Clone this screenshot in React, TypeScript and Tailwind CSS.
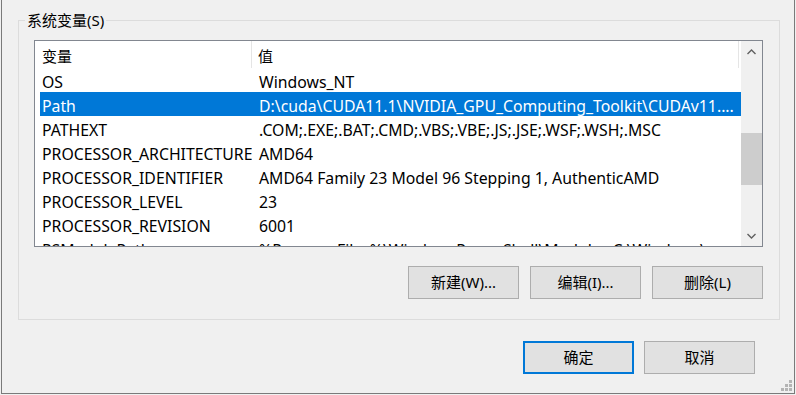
import React from "react";

const rows = [
  { name: "OS", value: "Windows_NT" },
  {
    name: "Path",
    value: "D:\\cuda\\CUDA11.1\\NVIDIA_GPU_Computing_Toolkit\\CUDAv11....",
    selected: true,
  },
  { name: "PATHEXT", value: ".COM;.EXE;.BAT;.CMD;.VBS;.VBE;.JS;.JSE;.WSF;.WSH;.MSC" },
  { name: "PROCESSOR_ARCHITECTURE", value: "AMD64" },
  { name: "PROCESSOR_IDENTIFIER", value: "AMD64 Family 23 Model 96 Stepping 1, AuthenticAMD" },
  { name: "PROCESSOR_LEVEL", value: "23" },
  { name: "PROCESSOR_REVISION", value: "6001" },
  { name: "PSModulePath", value: "%ProgramFiles%\\WindowsPowerShell\\Modules;C:\\Windows\\..." },
];

function Chevron({ up }: { up?: boolean }) {
  return (
    <svg width="9" height="6" viewBox="0 0 9 6">
      <path
        d={up ? "M0.5 5 L4.5 1 L8.5 5" : "M0.5 1 L4.5 5 L8.5 1"}
        fill="none"
        stroke="#606060"
        strokeWidth="1.4"
      />
    </svg>
  );
}

function Btn({ label, primary }: { label: string; primary?: boolean }) {
  return (
    <div
      className={
        "w-[111px] h-[33px] flex items-center justify-center bg-[#e1e1e1] text-black " +
        (primary ? "border-2 border-[#0078d7]" : "border border-[#adadad]")
      }
    >
      {label}
    </div>
  );
}

export default function App() {
  return (
    <div
      className="w-[796px] h-[395px] overflow-hidden bg-[#f0f0f0] text-[15px] text-black"
      style={{ fontFamily: '"Noto Sans", "Noto Sans CJK SC", sans-serif' }}
    >
      <div className="relative ml-[1px] w-[794px] h-[394px] border-x border-b border-[#7a7a7a] flex flex-col">
        {/* group box */}
        <div className="relative mt-[20px] ml-[16px] w-[762px] h-[300px] border border-[#dcdcdc] pl-[15px] pt-[19px]">
          <span className="absolute -top-[11px] left-[6px] px-[2px] bg-[#f0f0f0] leading-[20px]">
            系统变量(S)
          </span>

          {/* list view */}
          <div className="w-[729px] h-[207px] border border-[#828790] bg-white flex">
            <div className="flex-1 overflow-hidden pl-[5px]">
              <div className="h-[27px] grid grid-cols-[212px_487px] items-center">
                <div className="pl-[2px] pt-[3px] h-full flex items-center border-r border-[#e5e5e5]">变量</div>
                <div className="pl-[6px] pt-[3px] h-full flex items-center border-r border-[#e5e5e5]">值</div>
              </div>
              {rows.map((r) => (
                <div
                  key={r.name}
                  className={
                    "h-[24px] pt-[4px] grid grid-cols-[212px_488px] items-center whitespace-nowrap text-[15.8px] " +
                    (r.selected ? "bg-[#0078d7] text-white" : "")
                  }
                >
                  <div className="pl-[2px] overflow-hidden leading-[20px]">{r.name}</div>
                  <div className="pl-[7px] overflow-hidden leading-[20px]">{r.value}</div>
                </div>
              ))}
            </div>

            {/* scrollbar */}
            <div className="w-[21px] bg-[#f0f0f0] flex flex-col">
              <div className="h-[21px] flex items-center justify-center">
                <Chevron up />
              </div>
              <div className="flex-1 pt-[71px]">
                <div className="h-[52px] bg-[#cdcdcd]" />
              </div>
              <div className="h-[21px] flex items-center justify-center">
                <Chevron />
              </div>
            </div>
          </div>

          {/* action buttons */}
          <div className="mt-[19px] ml-[374px] flex gap-[11px]">
            <Btn label="新建(W)..." />
            <Btn label="编辑(I)..." />
            <Btn label="删除(L)" />
          </div>
        </div>

        {/* dialog buttons */}
        <div className="mt-[21px] ml-[521px] flex gap-[10px]">
          <Btn label="确定" primary />
          <Btn label="取消" />
        </div>

        {/* resize grip */}
        <svg className="absolute right-[1px] bottom-[1px]" width="12" height="12" viewBox="0 0 12 12">
          <g fill="#b4b4b4">
            <rect x="8" y="0" width="3" height="3" />
            <rect x="4" y="4" width="3" height="3" />
            <rect x="8" y="4" width="3" height="3" />
            <rect x="0" y="8" width="3" height="3" />
            <rect x="4" y="8" width="3" height="3" />
            <rect x="8" y="8" width="3" height="3" />
          </g>
        </svg>
      </div>
    </div>
  );
}
